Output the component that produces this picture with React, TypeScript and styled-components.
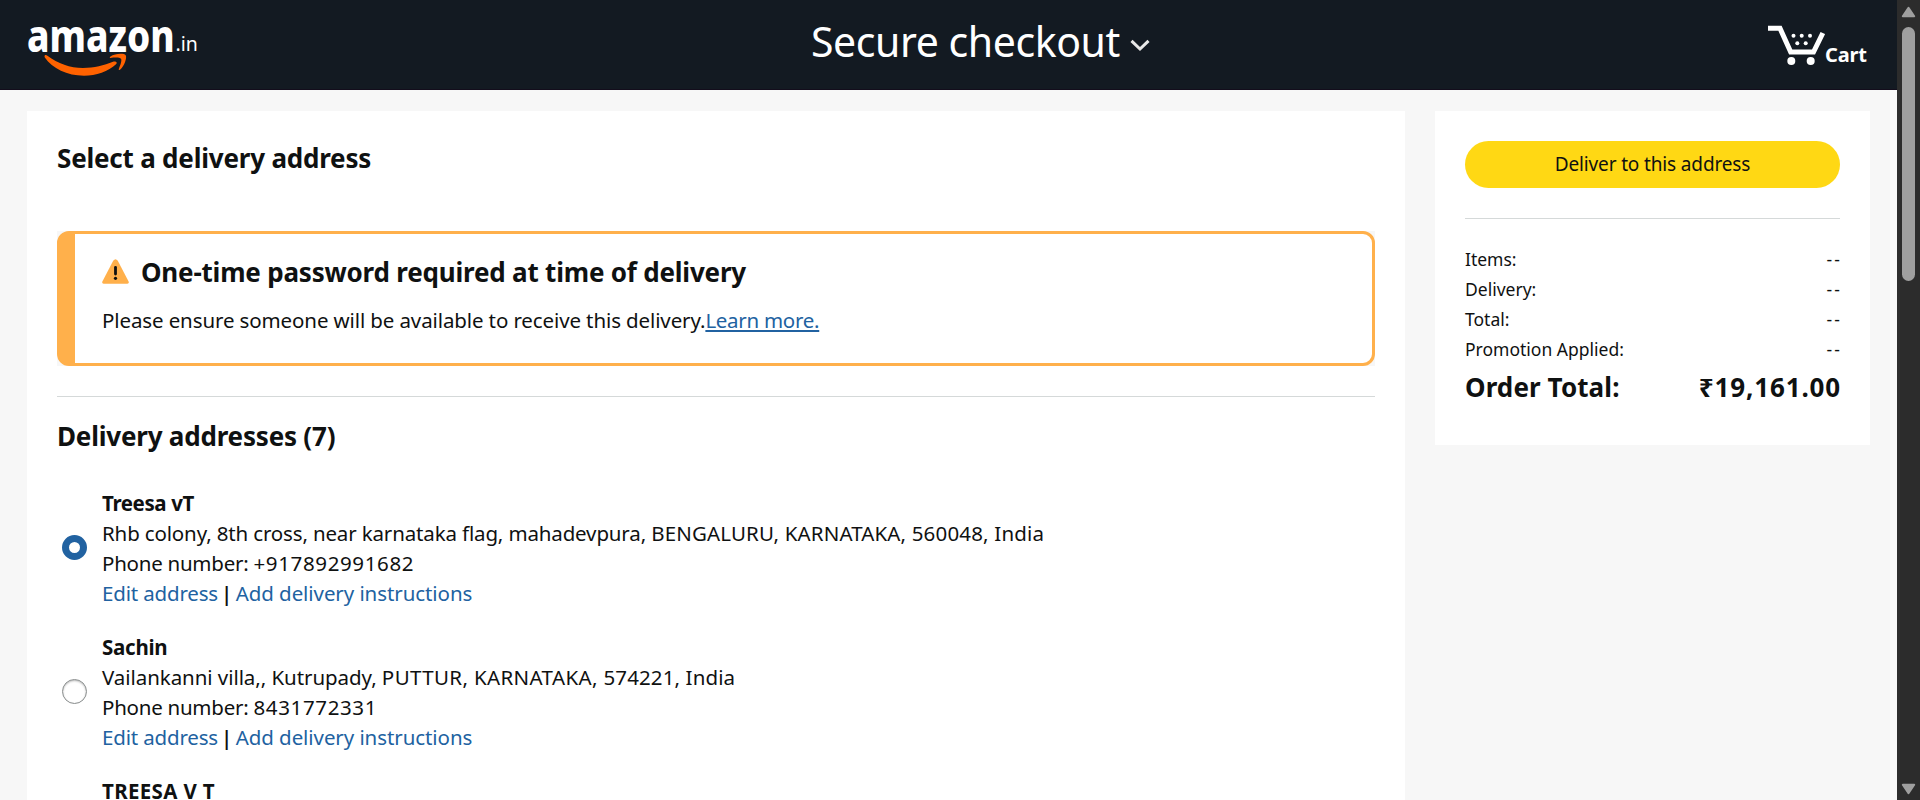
import React from "react";
import styled, { createGlobalStyle, css } from "styled-components";

const GlobalStyle = createGlobalStyle`
  *, *::before, *::after { box-sizing: border-box; }
  body {
    margin: 0;
    color: #0f1111;
    background: #f7f7f7;
    font-family: "Noto Sans", sans-serif;
    font-size: 20.5px;
    line-height: 30px;
    overflow: hidden;
  }
`;

const Shell = styled.div`
  display: grid;
  grid-template-columns: minmax(0, 1fr) 23px;
  width: 1920px;
  height: 800px;
  overflow: hidden;
`;

const Page = styled.div`
  height: 800px;
  overflow: hidden;
  background: #f7f7f7;
`;

const Header = styled.header`
  display: grid;
  grid-template-columns: 783px 1fr 130px;
  align-items: start;
  height: 90px;
  padding-left: 28px;
  background: #131a22;
  border-bottom: 1px solid #130d1c;
  color: #fff;
`;

const Logo = styled.a`
  display: flex;
  padding-top: 10px;
`;

const PageTitle = styled.h1`
  display: flex;
  align-items: center;
  gap: 10px;
  margin: 0;
  padding-top: 11px;
  font-size: 41px;
  font-weight: 440;
  line-height: 60px;
  letter-spacing: -0.42px;

  svg { margin-top: 9px; }
`;

const CartLink = styled.a`
  display: flex;
  align-items: flex-start;
  padding-top: 25px;
`;

const CartLabel = styled.span`
  padding-top: 15px;
  font-size: 20px;
  font-weight: 700;
  letter-spacing: -0.2px;
`;

const Columns = styled.main`
  display: flex;
  align-items: flex-start;
  gap: 30px;
  padding: 21px 27px 0;
`;

const AddressCard = styled.section`
  width: 1378px;
  height: 900px;
  padding: 29px 30px;
  background: #fff;
`;

const Heading = styled.h2`
  margin: 0;
  font-size: 26px;
  font-weight: 700;
  line-height: 36px;
  letter-spacing: -0.2px;
`;

const SectionHeading = styled(Heading)`
  margin-top: 21px;
`;

const AlertFrame = styled.div`
  margin-top: 55px;
  background: #f7f7f7;
`;

const Alert = styled.div`
  height: 135px;
  padding: 20px 24px 0 27px;
  background: #fff;
  border: 3px solid #ffb04b;
  border-left-width: 18px;
  border-radius: 12px;
`;

const AlertTitle = styled.div`
  display: flex;
  align-items: center;
  gap: 12px;

  svg { margin-top: -1px; }
`;

const AlertText = styled.p`
  margin: 15px 0 0;
  letter-spacing: -0.113px;
`;

const Divider = styled.hr`
  height: 1px;
  margin: 30px 0 0;
  border: 0;
  background: #d5d9d9;
`;

const Link = styled.a<{ $underline?: boolean; $spacing?: number }>`
  color: #2162a1;
  letter-spacing: ${(p) => p.$spacing ?? 0}px;
  ${(p) =>
    p.$underline &&
    css`
      text-decoration: underline;
      text-decoration-thickness: 2px;
      text-underline-offset: 2px;
      text-decoration-skip-ink: none;
    `}
`;

const AddressList = styled.ul`
  display: flex;
  flex-direction: column;
  gap: 24px;
  margin: 34px 0 0;
  padding: 0;
  list-style: none;
`;

const AddressRow = styled.li`
  display: flex;
  align-items: center;
  gap: 15px;
  padding-left: 5px;
`;

const Radio = styled.span<{ $checked?: boolean }>`
  flex: none;
  width: 25px;
  height: 25px;
  margin-bottom: 1px;
  border-radius: 50%;
  background: #fff;
  ${(p) =>
    p.$checked
      ? css`border: 7px solid #2162a1;`
      : css`
          border: 1px solid #888c8c;
          box-shadow: inset 0 1px 2px rgba(15, 17, 17, 0.3);
        `}
`;

const AddressBody = styled.div`
  display: flex;
  flex-direction: column;
  white-space: nowrap;
`;

const Line = styled.div<{ $bold?: boolean; $spacing?: number }>`
  height: 30px;
  white-space: pre;
  font-weight: ${(p) => (p.$bold ? 700 : 400)};
  letter-spacing: ${(p) => p.$spacing ?? 0}px;
`;

const Tracked = styled.span<{ $spacing: number }>`
  letter-spacing: ${(p) => p.$spacing}px;
`;

const Separator = styled.span`
  margin: 0 3.5px 0 3px;
  font-weight: 600;
`;

const LastName = styled(Line)`
  padding-left: 40px;
`;

const SummaryCard = styled.aside`
  width: 435px;
  height: 334px;
  padding: 30px;
  background: #fff;
`;

const DeliverButton = styled.button`
  display: block;
  width: 100%;
  height: 47px;
  padding: 0 0 1px;
  border: 0;
  border-radius: 24px;
  background: #ffd814;
  color: #0f1111;
  font: 400 19px/30px "Noto Sans", sans-serif;
  letter-spacing: -0.141px;
`;

const Totals = styled.dl`
  margin: 25px 0 0;
`;

const TotalRow = styled.div<{ $grand?: boolean }>`
  display: flex;
  justify-content: space-between;
  height: 30px;
  font-size: 17.5px;

  dd {
    margin: 0 -2.2px 0 0;
    letter-spacing: 2.2px;
  }

  ${(p) =>
    p.$grand &&
    css`
      height: 36px;
      margin-top: 5px;
      font-size: 26px;
      font-weight: 700;
      line-height: 36px;
      dt { letter-spacing: 0.1px; }
      dd { letter-spacing: 0.85px; margin-right: -1px; }
    `}
`;

const ScrollTrack = styled.div`
  display: flex;
  flex-direction: column;
  align-items: center;
  height: 800px;
  padding: 6px 0 5px;
  background: #2c2c2c;
`;

const ScrollThumb = styled.div`
  width: 13px;
  height: 254px;
  margin: 9px 0 auto;
  border-radius: 7px;
  background: #9f9f9f;
`;

const AmazonLogo = () => (
  <svg width="182" height="76" viewBox="28 10 182 76" overflow="visible">
    <text x="27" y="51.8" textLength="147.5" lengthAdjust="spacingAndGlyphs" fontFamily="Noto Sans" fontWeight="800" fontSize="44.5" fill="#fff">amazon</text>
    <text x="175.5" y="51" fontFamily="Noto Sans" fontSize="19.5" fill="#fff">.in</text>
    <path d="M44.5 56.2C44.7 54.8 46 54.6 47.4 55.7C58 63.5 70 68 83 68C94 68 104 65.5 113 61.8C115.5 60.7 118 62.3 116 64.3C108.500 71.500 96 75.700 84 75.700C67 75.700 52.500 68.500 44.800 57.500Z" fill="#ff6200" />
    <path d="M110.500 58C109.500 58.400 109.600 57.300 110.500 56.500C114.500 53.500 124 53 125.700 55.200C127.200 57.500 124.500 66 120 69.700C119.200 70.300 118.500 69.900 118.800 69C120.200 65.500 122.200 60.500 121 58.800C119.800 57.200 114.500 57.500 110.500 58Z" fill="#ff6200" />
  </svg>
);

const Chevron = () => (
  <svg width="20" height="13" viewBox="0 0 20 13">
    <path d="M1.500 1.800L10 10L18.500 1.800" fill="none" stroke="#e8e8e8" strokeWidth="3" />
  </svg>
);

const CartIcon = () => (
  <svg width="58" height="41" viewBox="1767 25 58 41">
    <path d="M1768 28.300H1780L1790.700 52H1813.500L1822.800 33" fill="none" stroke="#fff" strokeWidth="5" />
    <g fill="#fff">
      <circle cx="1791.300" cy="61" r="4" />
      <circle cx="1810.700" cy="61" r="4" />
      <circle cx="1793.500" cy="35.800" r="2" />
      <circle cx="1801.700" cy="35.800" r="2" />
      <circle cx="1810" cy="35.800" r="2" />
      <circle cx="1797.300" cy="43.300" r="2" />
      <circle cx="1805.700" cy="43.300" r="2" />
    </g>
  </svg>
);

const WarningIcon = () => (
  <svg width="27" height="25" viewBox="0 0 27 25">
    <path d="M11.200 1.800Q13.500 -1.200 15.800 1.800L26.600 22.600Q27.400 24.600 25.400 24.700H1.600Q-0.400 24.600 0.400 22.600Z" fill="#ffb04b" />
    <path d="M13.500 8.300V15" stroke="#0f1111" strokeWidth="2.800" strokeLinecap="round" />
    <circle cx="13.500" cy="19.300" r="1.600" fill="#0f1111" />
  </svg>
);

const Arrow = ({ down = false }: { down?: boolean }) => (
  <svg width="15" height="12" viewBox="0 0 15 12">
    <path
      d={down ? "M7.500 10.200L1.800 1.800H13.200Z" : "M7.500 1.800L13.200 10.200H1.800Z"}
      fill="#9f9f9f"
      stroke="#9f9f9f"
      strokeWidth="2"
      strokeLinejoin="round"
    />
  </svg>
);

type Part = [text: string, spacing: number];

const addresses: { name: string; nameSpacing: number; address: Part[]; phone: string; checked: boolean }[] = [
  {
    name: "Treesa vT",
    nameSpacing: -0.4,
    address: [
      ["Rhb colony, 8th cross, near karnataka flag, mahadevpura, ", -0.147],
      ["BENGALURU, KARNATAKA, ", 0.14],
      ["560048, India", 0.17],
    ],
    phone: "+917892991682",
    checked: true,
  },
  {
    name: "Sachin",
    nameSpacing: -0.25,
    address: [
      ["Vailankanni villa,, Kutrupady, ", -0.06],
      ["PUTTUR, KARNATAKA, ", 0.37],
      ["574221, India", 0.11],
    ],
    phone: "8431772331",
    checked: false,
  },
];

const totals = ["Items:", "Delivery:", "Total:", "Promotion Applied:"];

export default function App() {
  return (
    <>
      <GlobalStyle />
      <Shell>
        <Page>
          <Header>
            <Logo><AmazonLogo /></Logo>
            <PageTitle>Secure checkout<Chevron /></PageTitle>
            <CartLink><CartIcon /><CartLabel>Cart</CartLabel></CartLink>
          </Header>
          <Columns>
            <AddressCard>
              <Heading>Select a delivery address</Heading>
              <AlertFrame>
                <Alert>
                  <AlertTitle>
                    <WarningIcon />
                    <Heading as="h3">One-time password required at time of delivery</Heading>
                  </AlertTitle>
                  <AlertText>
                    Please ensure someone will be available to receive this delivery.
                    <Link $underline $spacing={-0.28}>Learn more.</Link>
                  </AlertText>
                </Alert>
              </AlertFrame>
              <Divider />
              <SectionHeading>Delivery addresses (7)</SectionHeading>
              <AddressList>
                {addresses.map((a) => (
                  <AddressRow key={a.name}>
                    <Radio $checked={a.checked} />
                    <AddressBody>
                      <Line $bold $spacing={a.nameSpacing}>{a.name}</Line>
                      <Line>
                        {a.address.map(([text, spacing]) => (
                          <Tracked key={text} $spacing={spacing}>{text}</Tracked>
                        ))}
                      </Line>
                      <Line>
                        <Tracked $spacing={-0.25}>{"Phone number: "}</Tracked>
                        <Tracked $spacing={0.63}>{a.phone}</Tracked>
                      </Line>
                      <Line>
                        <Link $spacing={-0.17}>Edit address</Link>
                        <Separator>|</Separator>
                        <Link $spacing={-0.076}>Add delivery instructions</Link>
                      </Line>
                    </AddressBody>
                  </AddressRow>
                ))}
                <AddressRow>
                  <LastName $bold $spacing={0.344}>TREESA V T</LastName>
                </AddressRow>
              </AddressList>
            </AddressCard>
            <SummaryCard>
              <DeliverButton>Deliver to this address</DeliverButton>
              <Divider />
              <Totals>
                {totals.map((label) => (
                  <TotalRow key={label}><dt>{label}</dt><dd>--</dd></TotalRow>
                ))}
                <TotalRow $grand><dt>Order Total:</dt><dd>₹19,161.00</dd></TotalRow>
              </Totals>
            </SummaryCard>
          </Columns>
        </Page>
        <ScrollTrack>
          <Arrow />
          <ScrollThumb />
          <Arrow down />
        </ScrollTrack>
      </Shell>
    </>
  );
}
